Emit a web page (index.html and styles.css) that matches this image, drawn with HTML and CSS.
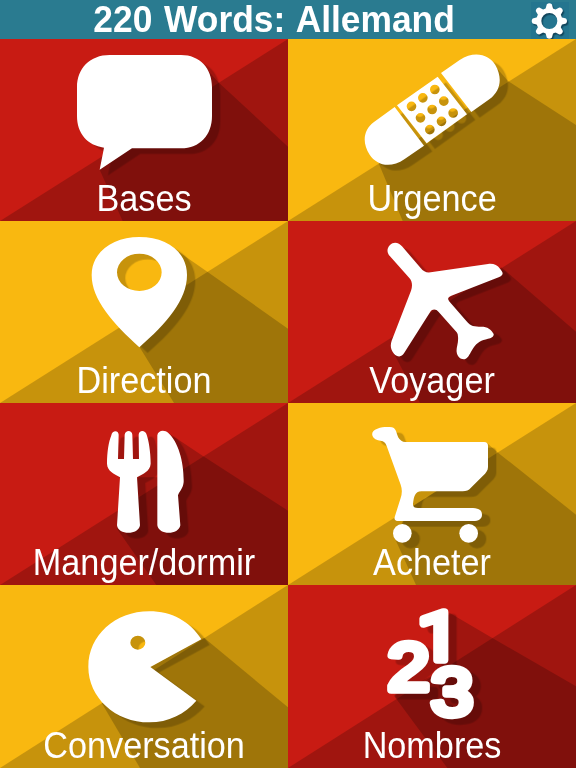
FILE: index.html
```html
<!DOCTYPE html>
<html lang="fr">
<head>
<meta charset="utf-8">
<title>220 Words: Allemand</title>
<link rel="stylesheet" href="styles.css">
</head>
<body>
<header class="bar">
  <h1 class="title"><span>220 Words: Allemand</span></h1>
  <button class="settings" aria-label="Options">
    <svg viewBox="-55 -57 114 111">
      <defs><path id="tooth" d="M-11.500 -36L-7.500 -50Q0 -56 7.500 -50L11.500 -36Z"/></defs>
      <g class="gear">
        <circle r="31.5" fill="none" stroke="#fff" stroke-width="15"/>
        <use href="#tooth"/><use href="#tooth" transform="rotate(45)"/>
        <use href="#tooth" transform="rotate(90)"/><use href="#tooth" transform="rotate(135)"/>
        <use href="#tooth" transform="rotate(180)"/><use href="#tooth" transform="rotate(225)"/>
        <use href="#tooth" transform="rotate(270)"/><use href="#tooth" transform="rotate(315)"/>
      </g>
    </svg>
  </button>
</header>
<main class="grid">
  <a class="tile red">
    <svg class="art" viewBox="0 117 864 546" preserveAspectRatio="none">
      <path class="shade" d="M864 117L0 663H864Z"/>
      <path class="shade" d="M600 185L655 247L864 440V663H368L299 509L396 440Z"/>
      <path class="icon" d="M329 165H543C600 165 636 205 636 262V348C636 405 600 445 543 445H396L299 509L312 443C262 436 231 400 231 348V262C231 205 270 165 329 165Z"/>
    </svg>
    <span class="label">Bases</span>
  </a>
  <a class="tile gold">
    <svg class="art" viewBox="0 117 864 546" preserveAspectRatio="none">
      <path class="shade" d="M864 117L0 663H864Z"/>
      <path class="shade" d="M605 180L660 243L864 375V663H344L272 490L408 437L550 334Z"/>
      <g class="icon">
        <path d="M320 321L408 437L350 477C305 508 265 494 245 464C222 430 225 390 258 366Z"/>
        <path fill-rule="evenodd" d="M449 230L537 343L416 430L327 316ZM356 319a14.500 14.500 0 1 0 29 0a14.500 14.500 0 1 0 -29 0ZM390 293.500a14.500 14.500 0 1 0 29 0a14.500 14.500 0 1 0 -29 0ZM426 268.500a14.500 14.500 0 1 0 29 0a14.500 14.500 0 1 0 -29 0ZM383 353.500a14.500 14.500 0 1 0 29 0a14.500 14.500 0 1 0 -29 0ZM418 328.500a14.500 14.500 0 1 0 29 0a14.500 14.500 0 1 0 -29 0ZM453 303.500a14.500 14.500 0 1 0 29 0a14.500 14.500 0 1 0 -29 0ZM411 389a14.500 14.500 0 1 0 29 0a14.500 14.500 0 1 0 -29 0ZM446 364a14.500 14.500 0 1 0 29 0a14.500 14.500 0 1 0 -29 0ZM481 339a14.500 14.500 0 1 0 29 0a14.500 14.500 0 1 0 -29 0Z"/>
        <path d="M459 219L515 180C560 150 605 165 622 195C645 235 637 275 604 298L550 336Z"/>
      </g>
    </svg>
    <span class="label">Urgence</span>
  </a>
  <a class="tile gold">
    <svg class="art" viewBox="0 3 864 546" preserveAspectRatio="none">
      <path class="shade" d="M864 3L0 549H864Z"/>
      <path class="shade" d="M525 88L622 155L864 326V549H522L418 380L550 210Z"/>
      <path class="icon" fill-rule="evenodd" d="M418 51C500 51 561 95 561 165C561 240 500 310 418 382C340 310 275 240 275 165C275 95 340 51 418 51ZM351 157a67 56 0 1 0 134 0a67 56 0 1 0 -134 0Z"/>
    </svg>
    <span class="label">Direction</span>
  </a>
  <a class="tile red">
    <svg class="art" viewBox="0 3 864 546" preserveAspectRatio="none">
      <path class="shade" d="M864 3L0 549H864Z"/>
      <path class="shade" d="M640 142L864 335V549H396L318 401L440 262L480 235Z"/>
      <path class="icon" d="M306 75C318 63 334 69 342 79L398 144Q410 160 428 157L600 132C615 130 628 134 636 146C648 160 646 165 632 172L490 227C478 232 478 238 486 247L535 303C548 320 560 320 580 320C598 320 610 328 617 342C618 350 610 354 600 356C580 361 568 366 556 384C545 400 543 412 532 417C520 420 508 412 506 396C504 384 512 370 510 350C510 340 506 336 500 330L452 276C445 267 433 266 427 275L348 400C341 412 328 412 318 401C308 388 306 378 311 362L369 212C374 200 373 182 364 174L306 109C296 98 296 85 306 75Z"/>
    </svg>
    <span class="label">Voyager</span>
  </a>
  <a class="tile red">
    <svg class="art" viewBox="0 3 864 546" preserveAspectRatio="none">
      <path class="shade" d="M864 3L0 549H864Z"/>
      <path class="shade" d="M505 93L610 163L864 326V549H469L352 382V340L415 226L474 226Z"/>
      <g class="icon">
        <path d="M334 100C336 85 355 83 356 98L354 171H372L374 98C376 83 396 83 397 98L399 171H417L416 98C417 83 436 83 440 98C446 115 452 150 452 185C450 208 430 215 411 226L420 370C416 400 354 400 351 370L360 226C342 215 322 208 321 185C321 150 326 120 334 100Z"/>
        <path d="M472 100C474 84 494 82 505 93C535 120 552 180 551 240C549 260 540 265 534 280L541 370C536 400 476 400 472 370Z"/>
      </g>
    </svg>
    <span class="label">Manger/dormir</span>
  </a>
  <a class="tile gold">
    <svg class="art" viewBox="0 3 864 546" preserveAspectRatio="none">
      <path class="shade" d="M864 3L0 549H864Z"/>
      <path class="shade" d="M597 123L630 152L864 338V549H384L320 408L345 357L375 312L445 268L590 200Z"/>
      <g class="icon">
        <path d="M268 80C285 74 300 75 312 76C330 80 322 105 340 116Q345 120 352 120H588Q600 120 600 132V195C600 205 594 213 585 221L548 258Q540 268 524 268H400C380 268 378 285 375 305Q374 318 390 318H555C575 320 582 325 582 338C582 350 572 357 555 357H328Q316 356 321 342L338 288Q345 268 338 248L296 132C290 115 280 118 270 115C247 108 247 86 268 80Z"/>
        <circle cx="343" cy="394" r="28"/><circle cx="542" cy="394" r="28"/>
      </g>
    </svg>
    <span class="label">Acheter</span>
  </a>
  <a class="tile gold">
    <svg class="art" viewBox="0 3 864 549" preserveAspectRatio="none">
      <path class="shade" d="M864 3L0 552H864Z"/>
      <path class="shade" d="M600 166L613 162L864 370V552H420L305 357L451 249Z"/>
      <path class="icon" fill-rule="evenodd" d="M604 166L451 249L589 350C555 390 505 415 448 415C345 415 265 340 265 248C265 155 345 82 448 82C515 82 570 112 604 166ZM391 176a22.500 21 0 1 0 45 0a22.500 21 0 1 0 -45 0Z"/>
    </svg>
    <span class="label">Conversation</span>
  </a>
  <a class="tile red">
    <svg class="art" viewBox="0 3 864 549" preserveAspectRatio="none">
      <path class="shade" d="M864 3L0 552H864Z"/>
      <path class="shade" d="M484 86L613 162L864 307V552H478L318 335L440 270Z"/>
      <g class="icon digits">
        <text transform="scale(1.13 1)"><tspan class="one" x="343" y="228">1</tspan><tspan x="264" y="317">2</tspan><tspan x="380" y="394">3</tspan></text>
      </g>
    </svg>
    <span class="label">Nombres</span>
  </a>
</main>
</body>
</html>
```

FILE: styles.css
```css
* { box-sizing: border-box; }

body {
  margin: 0;
  width: 576px;
  height: 768px;
  overflow: hidden;
  display: flex;
  flex-direction: column;
  font-family: "Liberation Sans", Arial, sans-serif;
  color: #fff;
}

.bar {
  flex: none;
  height: 39px;
  display: flex;
  padding-right: 7px;
  background: #2a7b90;
}

.title {
  flex: 1;
  margin: 0;
  padding-left: 17px;
  text-align: center;
  font-size: 36px;
  font-weight: bold;
  line-height: 40px;
  word-spacing: 2px;
  white-space: nowrap;
}

.title span {
  display: inline-block;
  transform: scaleX(.982);
}

.settings {
  width: 38px;
  height: 37px;
  margin: 2px 0 0;
  padding: 0;
  border: 0;
  background: #24758f;
}

.settings svg { display: block; width: 38px; height: 37px; }

.gear {
  fill: #fff;
  filter: drop-shadow(4px 5px 2px rgb(0 30 50 / .55));
}

.grid {
  flex: 1;
  display: grid;
  grid-template-columns: 1fr 1fr;
  grid-template-rows: 182px 182px 182px 183px;
}

.tile {
  display: grid;
  overflow: hidden;
}

.tile > * { grid-area: 1 / 1; }

.red { background: #c81b13; }
.gold { background: #f9b810; }

.art { display: block; width: 100%; height: 100%; }

.shade { fill: rgb(0 0 0 / .2); }

.icon {
  fill: #fff;
  filter: drop-shadow(25px 17px 0 rgb(0 0 0 / .2));
}

.digits {
  font-size: 201px;
  stroke: #fff;
  stroke-width: 22px;
  stroke-linejoin: round;
}

.one { font-family: Roboto, sans-serif; }

.label {
  align-self: end;
  justify-self: center;
  font-size: 36px;
  line-height: 40px;
  margin-bottom: 2px;
  white-space: nowrap;
  transform: scaleX(.95);
}
```
